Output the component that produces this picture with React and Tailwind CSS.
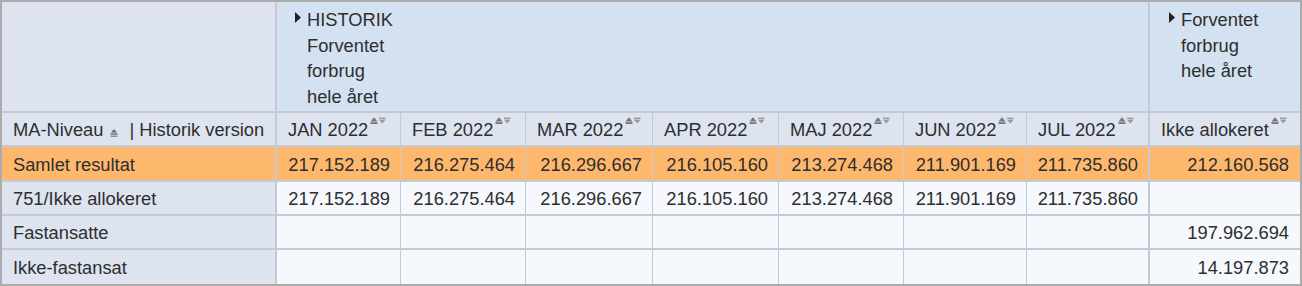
import React from "react";

const months = ["JAN 2022", "FEB 2022", "MAR 2022", "APR 2022", "MAJ 2022", "JUN 2022", "JUL 2022"];
const monthBorder = [
  "border-r",
  "border-r",
  "border-r",
  "border-r",
  "border-r",
  "border-r",
  "border-r-2",
];

const rows = [
  {
    label: "Samlet resultat",
    orange: true,
    vals: ["217.152.189", "216.275.464", "216.296.667", "216.105.160", "213.274.468", "211.901.169", "211.735.860"],
    last: "212.160.568",
  },
  {
    label: "751/Ikke allokeret",
    vals: ["217.152.189", "216.275.464", "216.296.667", "216.105.160", "213.274.468", "211.901.169", "211.735.860"],
    last: "",
  },
  { label: "Fastansatte", vals: ["", "", "", "", "", "", ""], last: "197.962.694" },
  { label: "Ikke-fastansat", vals: ["", "", "", "", "", "", ""], last: "14.197.873" },
];

function SortIcon() {
  return (
    <svg width="16" height="8" viewBox="0 0 16 8" className="ml-[2px] mt-[1px] shrink-0">
      <polygon points="0.5,4.4 4,0.2 7.5,4.4" fill="#777" />
      <rect x="0.5" y="5.2" width="7" height="1.8" fill="#777" />
      <rect x="9" y="0.6" width="6.5" height="1.5" fill="#999" />
      <polygon points="9,2.8 15.5,2.8 12.25,6.6" fill="#999" />
    </svg>
  );
}

function LevelIcon() {
  return (
    <svg width="8" height="8" viewBox="0 0 8 8" className="ml-[7px] mr-[9px] mt-[5px] shrink-0">
      <polygon points="0.8,3.4 4,0.2 7.2,3.4" fill="#666" />
      <rect x="0.5" y="4.4" width="7" height="1.3" fill="#666" />
      <rect x="0.5" y="6.6" width="7" height="1.3" fill="#888" />
    </svg>
  );
}

function Triangle() {
  return (
    <svg width="6" height="11" viewBox="0 0 6 11" className="mt-[5px] mr-[6px] shrink-0">
      <polygon points="0,0 6,5.5 0,11" fill="#222" />
    </svg>
  );
}

export default function App() {
  const rowH = ["h-[35px]", "h-[34px]", "h-[34px]", "h-[34px]"];
  return (
    <div
      className="w-[1302px] h-[286px] border-2 border-[#ababab] bg-[#f5f8fd] text-[18.3px] text-[#2e2e2e] overflow-hidden"
      style={{ fontFamily: '"Liberation Sans", Arial, sans-serif' }}
    >
      <div className="grid grid-cols-[275px_124px_125px_127px_126px_125px_123px_123px_150px]">
        {/* header row 1 */}
        <div className="h-[111px] bg-[#dde4f0] border-r-2 border-b-2 border-[#c4cad4]" />
        <div className="col-span-7 h-[111px] bg-[#d3e1f0] border-r-2 border-b-2 border-[#c4cad4] pl-[18px] pt-[5px] flex items-start leading-[25.5px]">
          <Triangle />
          <div className="flex flex-col">
            <span>HISTORIK</span>
            <span>Forventet</span>
            <span>forbrug</span>
            <span>hele året</span>
          </div>
        </div>
        <div className="h-[111px] bg-[#d3e1f0] border-b-2 border-[#c4cad4] pl-[19px] pt-[5px] flex items-start leading-[25.5px]">
          <Triangle />
          <div className="flex flex-col">
            <span>Forventet</span>
            <span>forbrug</span>
            <span>hele året</span>
          </div>
        </div>

        {/* header row 2 */}
        <div className="h-[34px] bg-[#dde4f0] border-r-2 border-b-2 border-[#c4cad4] pl-[11px] pt-[2px] flex items-center whitespace-nowrap">
          <span>MA-Niveau</span>
          <LevelIcon />
          <span className="ml-[2px]">| Historik version</span>
        </div>
        {months.map((m, i) => (
          <div
            key={m}
            className={`h-[34px] bg-[#dde4f0] ${monthBorder[i]} border-b-2 border-[#c4cad4] pl-[11px] pt-[2px] flex items-center whitespace-nowrap`}
          >
            <span className="flex items-start">
              <span>{m}</span>
              <SortIcon />
            </span>
          </div>
        ))}
        <div className="h-[34px] bg-[#dde4f0] border-b-2 border-[#c4cad4] pl-[11px] pt-[2px] flex items-center whitespace-nowrap">
          <span className="flex items-start">
            <span>Ikke allokeret</span>
            <SortIcon />
          </span>
        </div>

        {/* data rows */}
        {rows.map((r, ri) => {
          const isLast = ri === rows.length - 1;
          const bb = isLast ? "" : "border-b-2";
          const h = rowH[ri];
          const dataBg = r.orange ? "bg-[#feb86d]" : "bg-[#f5f8fd]";
          const headBg = r.orange ? "bg-[#feb86d]" : "bg-[#dde4f0]";
          return (
            <React.Fragment key={r.label}>
              <div className={`${h} ${headBg} border-r-2 ${bb} border-[#c4cad4] pl-[11px] pt-[2px] flex items-center whitespace-nowrap`}>
                {r.label}
              </div>
              {r.vals.map((v, i) => (
                <div
                  key={i}
                  className={`${h} ${dataBg} ${monthBorder[i]} ${bb} border-[#c4cad4] pr-[10px] pt-[2px] flex items-center justify-end whitespace-nowrap`}
                >
                  {v}
                </div>
              ))}
              <div className={`${h} ${dataBg} ${bb} border-[#c4cad4] pr-[11px] pt-[2px] flex items-center justify-end whitespace-nowrap`}>
                {r.last}
              </div>
            </React.Fragment>
          );
        })}
      </div>
    </div>
  );
}
